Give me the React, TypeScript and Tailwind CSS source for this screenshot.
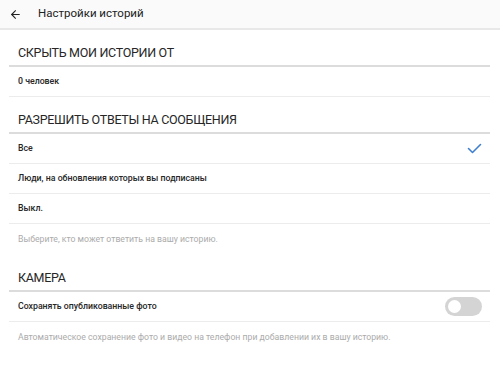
import { ArrowLeft } from 'lucide-react'

const SectionTitle = ({ children }: { children: string }) => (
  <div className="h-[37px] flex items-end pb-[4px] pl-[9px] border-b-2 border-[#dcdcdc]">
    <span className="text-[12.5px] leading-[16px] text-[#262626] tracking-[-0.3px]">{children}</span>
  </div>
)

const Row = ({ children, right }: { children: string; right?: React.ReactNode }) => (
  <div className="h-[30px] flex items-center justify-between pl-[9px] pr-[8px] border-b border-[#ececec]">
    <span className="text-[8.75px] font-medium text-[#262626]">{children}</span>
    {right}
  </div>
)

const Hint = ({ children }: { children: string }) => (
  <div className="h-[31px] flex items-center pl-[9px]">
    <span className="text-[8.7px] text-[#ababab]">{children}</span>
  </div>
)

export default function App() {
  return (
    <div className="w-[500px] h-[373px] bg-white overflow-hidden" style={{ fontFamily: 'Roboto, "Noto Sans", sans-serif' }}>
      <div className="h-[30px] bg-[#fafafa] border-b-2 border-[#e8e8e8] flex items-center">
        <ArrowLeft className="ml-[9px] text-[#222]" size={13} strokeWidth={2} />
        <span className="ml-[16px] text-[11.5px] text-[#222]">Настройки историй</span>
      </div>
      <div className="ml-[9px] mr-[10px]">
        <SectionTitle>СКРЫТЬ МОИ ИСТОРИИ ОТ</SectionTitle>
        <Row>0 человек</Row>
        <SectionTitle>РАЗРЕШИТЬ ОТВЕТЫ НА СООБЩЕНИЯ</SectionTitle>
        <Row
          right={
            <svg width="15" height="11" viewBox="0 0 15 11" fill="none">
              <path d="M1.5 5.5 L5.5 9.5 L13.5 1.5" stroke="#3f7fcf" strokeWidth="1.6" strokeLinecap="round" strokeLinejoin="round" />
            </svg>
          }
        >
          Все
        </Row>
        <Row>Люди, на обновления которых вы подписаны</Row>
        <Row>Выкл.</Row>
        <Hint>Выберите, кто может ответить на вашу историю.</Hint>
        <SectionTitle>КАМЕРА</SectionTitle>
        <Row
          right={
            <div className="w-[37px] h-[19px] rounded-full bg-[#d4d4d4] flex items-center pl-[3px]">
              <div className="w-[13px] h-[13px] rounded-full bg-white" />
            </div>
          }
        >
          Сохранять опубликованные фото
        </Row>
        <Hint>Автоматическое сохранение фото и видео на телефон при добавлении их в вашу историю.</Hint>
      </div>
    </div>
  )
}
